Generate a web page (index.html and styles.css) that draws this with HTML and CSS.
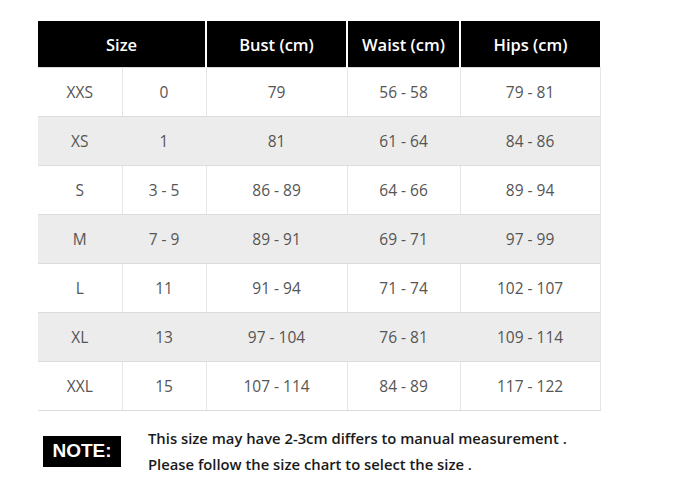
FILE: index.html
```html
<!DOCTYPE html>
<html>
<head>
<meta charset="utf-8">
<link rel="stylesheet" href="styles.css">
</head>
<body>
<div class="page">
  <table class="chart">
    <colgroup>
      <col class="c1"><col class="c2"><col class="c3"><col class="c4"><col class="c5">
    </colgroup>
    <thead>
      <tr><th colspan="2">Size</th><th>Bust (cm)</th><th>Waist (cm)</th><th>Hips (cm)</th></tr>
    </thead>
    <tbody>
      <tr><td>XXS</td><td>0</td><td>79</td><td>56 - 58</td><td>79 - 81</td></tr>
      <tr class="alt"><td>XS</td><td>1</td><td>81</td><td>61 - 64</td><td>84 - 86</td></tr>
      <tr><td>S</td><td>3 - 5</td><td>86 - 89</td><td>64 - 66</td><td>89 - 94</td></tr>
      <tr class="alt"><td>M</td><td>7 - 9</td><td>89 - 91</td><td>69 - 71</td><td>97 - 99</td></tr>
      <tr><td>L</td><td>11</td><td>91 - 94</td><td>71 - 74</td><td>102 - 107</td></tr>
      <tr class="alt"><td>XL</td><td>13</td><td>97 - 104</td><td>76 - 81</td><td>109 - 114</td></tr>
      <tr><td>XXL</td><td>15</td><td>107 - 114</td><td>84 - 89</td><td>117 - 122</td></tr>
    </tbody>
  </table>
  <div class="note">
    <div class="badge">NOTE:</div>
    <div class="note-text">
      <p>This size may have 2-3cm differs to manual measurement .</p>
      <p>Please follow the size chart to select the size .</p>
    </div>
  </div>
</div>
</body>
</html>
```

FILE: styles.css
```css
html, body {
  margin: 0;
  padding: 0;
  background: #ffffff;
}
.page {
  padding: 21px 0 0 38px;
}
.chart {
  border-collapse: collapse;
  table-layout: fixed;
  width: 562px;
  font-family: "Open Sans", "Noto Sans", sans-serif;
}
.c1 { width: 84px; }
.c2 { width: 84px; }
.c3 { width: 141px; }
.c4 { width: 113px; }
.c5 { width: 140px; }
.chart th {
  background: #000;
  color: #fff;
  font-weight: 600;
  font-size: 16.5px;
  height: 46px;
  padding: 0;
  border-left: 2px solid #fff;
  text-align: center;
}
.chart th:first-child { border-left: none; }
.chart td {
  height: 48px;
  padding: 0;
  text-align: center;
  color: #555;
  font-size: 15.5px;
  font-family: "Open Sans", "Noto Sans", sans-serif;
  border: 1px solid #e6e6e6;
  border-top-color: #dcdcdc;
  border-bottom-color: #dcdcdc;
}
.chart td:first-child { border-left: none; }
.chart tr.alt td {
  background: #ececec;
  border-left-color: #ececec;
  border-right-color: #ececec;
}
.chart tr.alt td:last-child { border-right-color: #e6e6e6; }
.note {
  display: flex;
  align-items: center;
  margin-top: 14px;
  font-family: "Open Sans", "Noto Sans", sans-serif;
}
.badge {
  margin-left: 5px;
  width: 78px;
  height: 31px;
  background: #000;
  color: #fff;
  font-family: "Liberation Sans", Arial, sans-serif;
  font-weight: 700;
  font-size: 19px;
  display: flex;
  align-items: center;
  justify-content: center;
}
.note-text {
  margin-left: 27px;
}
.note-text p {
  margin: 0;
  font-size: 14.8px;
  font-weight: 600;
  color: #1a1a1a;
  line-height: 26px;
}
```
